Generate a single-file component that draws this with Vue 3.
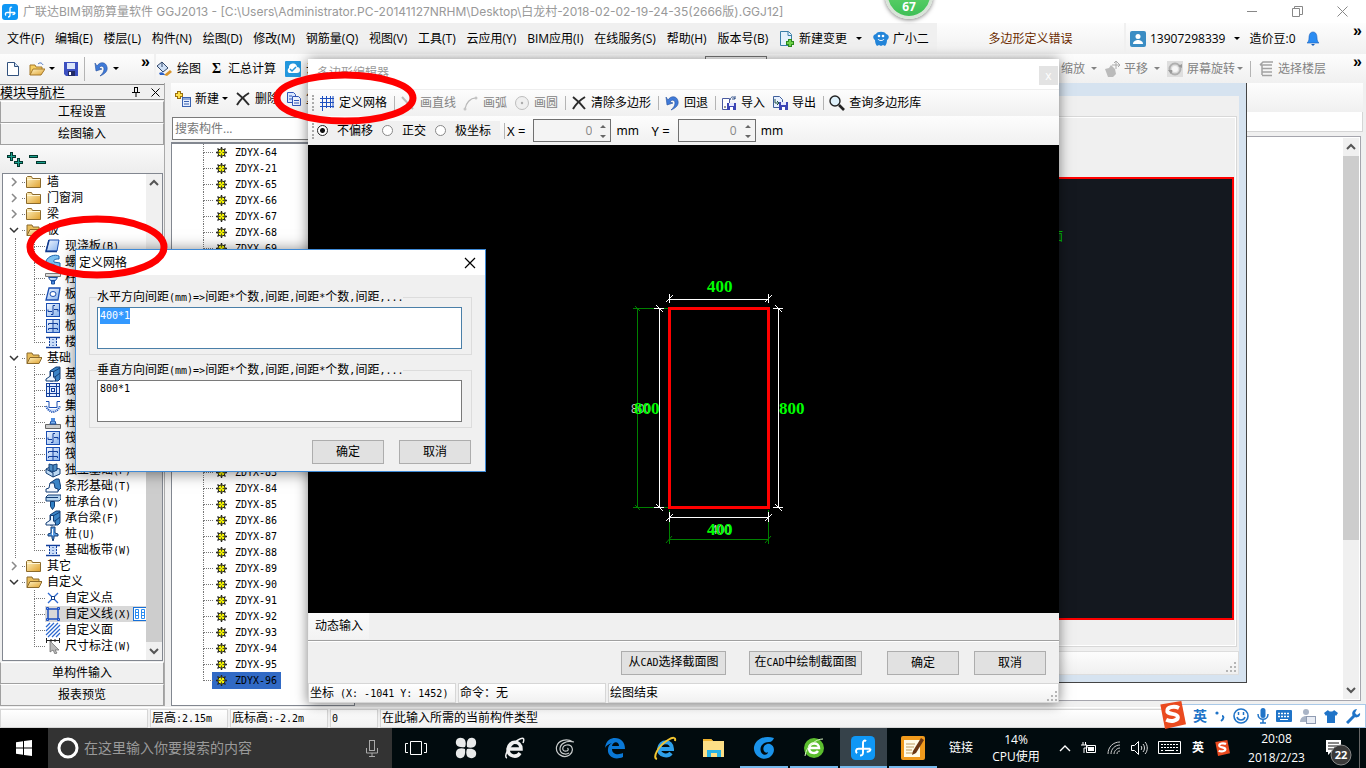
<script setup>
import { h, onMounted, ref } from 'vue'

// Half-width characters are set in a monospace face, half as wide as a CJK glyph.
const Sim = (props) =>
  h(
    'span',
    { class: 'sim' },
    props.t
      .split(/([\x20-\x7e]+)/)
      .filter(Boolean)
      .map((s) => (/^[\x20-\x7e]/.test(s) ? h('span', { class: 'hw' }, s) : s))
  )
Sim.props = ['t']

const Ic = (props) => h('svg', { class: 'ic', viewBox: '0 0 16 16', 'aria-hidden': 'true' }, [h('use', { href: '#' + props.n })])
Ic.props = ['n']

const menus = ['文件(F)', '编辑(E)', '楼层(L)', '构件(N)', '绘图(D)', '修改(M)', '钢筋量(Q)', '视图(V)', '工具(T)', '云应用(Y)', 'BIM应用(I)', '在线服务(S)', '帮助(H)', '版本号(B)']

const tree = [
  { t: '墙' },
  { t: '门窗洞' },
  { t: '梁' },
  {
    t: '板', open: true,
    kids: [['slab', '现浇板(B)'], ['spiral', '螺旋板(B)'], ['cap', '柱帽(V)'], ['hole', '板洞(N)'], ['rebar', '板受力筋(S)'], ['rebar2', '板负筋(F)'], ['strip', '楼层板带(H)']]
  },
  {
    t: '基础', open: true,
    kids: [['beam', '基础梁(F)'], ['raft', '筏板基础(M)'], ['sump', '集水坑(K)'], ['pier', '柱墩(Y)'], ['rebar', '筏板主筋(R)'], ['rebar2', '筏板负筋(X)'], ['iso', '独立基础(P)'], ['stripf', '条形基础(T)'], ['pilecap', '桩承台(V)'], ['beam', '承台梁(F)'], ['pile', '桩(U)'], ['strip', '基础板带(W)']]
  },
  { t: '其它' },
  { t: '自定义', open: true, kids: [['pt', '自定义点'], ['ln', '自定义线(X)'], ['face', '自定义面'], ['dim', '尺寸标注(W)']] }
]

const parts = [64, 21, ...Array.from({ length: 32 }, (_, i) => 65 + i)]

const editTools = [
  { i: 'grid', t: '定义网格', sep: true },
  { i: 'line', t: '画直线', off: true },
  { i: 'arc', t: '画弧', off: true },
  { i: 'circ', t: '画圆', off: true, sep: true },
  { i: 'cross', t: '清除多边形', sep: true },
  { i: 'undo', t: '回退', sep: true },
  { i: 'imp', t: '导入' },
  { i: 'exp', t: '导出', sep: true },
  { i: 'find', t: '查询多边形库' }
]

const hint = '间距(mm)=>间距*个数,间距,间距*个数,间距,...'
const first = ref(null)
onMounted(() => {
  first.value.focus({ preventScroll: true })
  first.value.select()
})
</script>

<template>
  <div class="desk">
    <svg class="defs" width="0" height="0" aria-hidden="true">
      <defs>
        <linearGradient id="gb" x1="0" y1="0" x2="1" y2="1"><stop offset="0" stop-color="#f2f7ff" /><stop offset="1" stop-color="#8ab4ee" /></linearGradient>
        <linearGradient id="gf" x1="0" y1="0" x2="1" y2="1"><stop offset="0" stop-color="#fff3c4" /><stop offset="1" stop-color="#dfa12d" /></linearGradient>
      </defs>
      <symbol id="logo" viewBox="0 0 16 16"><rect width="16" height="16" rx="3" fill="#0f97f5" /><path d="M10 3.500c-1-1-2 0-2 1v6.500c0 2-1 2-2 2M13 8.500H5c-2 0-2 2-1 3M13 8.500c0 1.500-1 2-2.500 2" fill="none" stroke="#fff" stroke-width="1.300" /></symbol>
      <symbol id="new" viewBox="0 0 16 16"><path d="M2.500 1.500h7l4 4v9h-11z" fill="#fff" stroke="#32527e" /><path d="M9.500 1.500v4h4" fill="#cfe0f5" stroke="#32527e" /></symbol>
      <symbol id="open" viewBox="0 0 16 16"><path d="M1 14V4h5l1 2h6v3" fill="#f7cf62" stroke="#a5782a" /><path d="M1 14l3-6h12l-4 6z" fill="url(#gf)" stroke="#a5782a" /><path d="M9 3c2-2 4-1 5 1" fill="none" stroke="#3d6cc0" /></symbol>
      <symbol id="save" viewBox="0 0 16 16"><path d="M1 1h14v14H3l-2-2z" fill="#3c50c0" /><path d="M4 2h8v6H4z" fill="#dce6fa" /><path d="M5 10h7v5H5z" fill="#222b66" /><path d="M6 11h2v3H6z" fill="#fff" /></symbol>
      <symbol id="undo" viewBox="0 0 16 16"><path d="M2 2l1 8 6-2-3-1c2-3 5-2 5 1s-2 5-4 7c5-2 8-5 7-9C13 1 7 0 4 5z" fill="#3f7ad8" stroke="#234f9e" stroke-width=".600" /></symbol>
      <symbol id="paint" viewBox="0 0 16 16"><path d="M1 5l5-4 6 6-5 4z" fill="#cfe0f5" stroke="#33486b" /><path d="M6 1v5" stroke="#33486b" /><path d="M8 14l6-5 2 2-5 4z" fill="#d9952b" /><path d="M3 12c3-2 5 0 6 2H4z" fill="#2c62c8" /></symbol>
      <symbol id="cloud" viewBox="0 0 16 16"><rect width="16" height="16" rx="1" fill="#2397dd" /><path d="M4 12a3 3 0 0 1 0-5 4 4 0 0 1 8-1 3 3 0 0 1 0 6z" fill="#fff" /><path d="M5 8l2 2 4-4" fill="none" stroke="#2397dd" stroke-width="1.500" /></symbol>
      <symbol id="chg" viewBox="0 0 16 16"><path d="M1.500.500h8l3 3v11h-11z" fill="#e4f2fc" stroke="#3a7fa8" /><path d="M9 .500v4h4" fill="none" stroke="#3a7fa8" /><path d="M11 8v8M7 12h8" stroke="#2c8a1d" stroke-width="4" /><path d="M11 9v6M8 12h6" stroke="#6fd24a" stroke-width="2" /></symbol>
      <symbol id="bot" viewBox="0 0 16 16"><path d="M3 3c1-3 9-3 10 0 4 1 3 5 1 6 0 3-1 5-2 6l-2-1-2 1-2-1-2 1C3 14 2 12 2 9 0 8-1 4 3 3z" fill="#2385d9" /><circle cx="6" cy="5" r="1.300" fill="#fff" /><circle cx="10" cy="5" r="1.300" fill="#fff" /><path d="M5 8c1 2 5 2 6 0" stroke="#fff" fill="none" /></symbol>
      <symbol id="user" viewBox="0 0 16 16"><rect width="16" height="16" rx="2" fill="#3b8dc4" /><circle cx="8" cy="5.500" r="2.500" fill="#fff" /><path d="M3 13c0-3 3-4 5-4s5 1 5 4z" fill="#fff" /></symbol>
      <symbol id="bell" viewBox="0 0 16 16"><path d="M8 1c3 0 4 3 4 6s1 4 2 5H2c1-1 2-2 2-5s1-6 4-6z" fill="#2b8cf2" stroke="#1b5fb8" stroke-width=".600" /><path d="M6 13h4l-2 2z" fill="#1b5fb8" /></symbol>
      <symbol id="hand" viewBox="0 0 16 16"><path d="M1 8l4-1 2-3 4 4 1 5-3 3H4z" fill="#bbb" /><path d="M12 0v8M8 4h8M10 2l2-2 2 2M14 2l2 2-2 2" stroke="#aaa" fill="none" /></symbol>
      <symbol id="rot" viewBox="0 0 16 16"><rect width="16" height="16" fill="#dedede" /><circle cx="8" cy="8" r="5.500" fill="none" stroke="#b0b0b0" stroke-width="2" /><path d="M1 9l3 4 2-4zM11 5l4-2v4z" fill="#999" /><circle cx="8" cy="8" r="3" fill="#f7f7f7" /></symbol>
      <symbol id="floors" viewBox="0 0 16 16"><path d="M2 4l3-3h10M2 4h12M4 7.500h10M4 11h10M4 14.500h10M4 4v10" fill="none" stroke="#a2a2a2" stroke-width="1.500" /></symbol>
      <symbol id="add" viewBox="0 0 16 16"><path d="M4 0v8M0 4h8" stroke="#9a6f10" stroke-width="4" /><path d="M4 1v6M1 4h6" stroke="#ffe04a" stroke-width="2" /><rect x="7.500" y="6.500" width="8" height="9" fill="#e6efff" stroke="#3a62b0" /><path d="M8 8h7M9 10.500h5M9 13h5" stroke="#3a62b0" /></symbol>
      <symbol id="cross" viewBox="0 0 16 16"><path d="M2 2c4 3 8 7 12 12M14 2C9 5 5 9 2 14" stroke="#2b2b2b" stroke-width="2" fill="none" /></symbol>
      <symbol id="copy" viewBox="0 0 16 16"><path d="M1.500 1.500h6l2 2v8h-8z" fill="#dbe8ff" stroke="#3056b8" /><path d="M6.500 5.500h6l2 2v7h-8z" fill="#eef4ff" stroke="#3056b8" /><path d="M8 9.500h5M8 12h5M3 5h3M3 8h3" stroke="#3056b8" /></symbol>
      <symbol id="grid" viewBox="0 0 16 16"><path d="M3.500 1v15M7.500 1v12M11.500 1v12M1 3.500h14M1 7.500h14M1 11.500h14M14 1v12" stroke="#1d4fc0" fill="none" /></symbol>
      <symbol id="line" viewBox="0 0 16 16"><path d="M2 2l11 12" stroke="#bbb" stroke-width="2" /></symbol>
      <symbol id="arc" viewBox="0 0 16 16"><path d="M2 14C3 8 7 3 13 3" fill="none" stroke="#b9b9b9" stroke-width="1.200" /><circle cx="13" cy="3" r="1.500" fill="#c4c4c4" /><circle cx="2" cy="14" r="1.500" fill="#c4c4c4" /></symbol>
      <symbol id="circ" viewBox="0 0 16 16"><circle cx="8" cy="8" r="6.500" fill="#efefef" stroke="#bdbdbd" /><circle cx="8" cy="8" r="1.200" fill="#aaa" /></symbol>
      <symbol id="imp" viewBox="0 0 16 16"><path d="M1.500 3.500h7v11h-7z" fill="#fff" stroke="#4a5aa0" /><path d="M6 8h9v7H6z" fill="#3d46b5" /><path d="M8 8h5v3H8z" fill="#e6e9ff" /><path d="M9 12h3v3H9z" fill="#fff" /><path d="M9 5c1-4 4-4 5-1M14 1v3h-3" stroke="#31508a" fill="none" /><path d="M3 12h2" stroke="#333" /></symbol>
      <symbol id="exp" viewBox="0 0 16 16"><path d="M1.500 1.500h6l3 3v8h-9z" fill="#e8f0ff" stroke="#3f5f9a" /><path d="M3 4v4h4M5 6l2 2-2 2" stroke="#254" fill="none" /><path d="M7 7h9v8H7z" fill="#3d46b5" /><path d="M9 7h5v3H9z" fill="#e6e9ff" /><path d="M10 12h3v3h-3z" fill="#fff" /></symbol>
      <symbol id="find" viewBox="0 0 16 16"><circle cx="6" cy="6" r="5" fill="#dff1fb" stroke="#222" stroke-width="1.400" /><path d="M10 10l5 5" stroke="#222" stroke-width="2.600" /></symbol>
      <symbol id="fold" viewBox="0 0 16 16"><path d="M.500 3.500l1-1h4l1 2h8v9H.500z" fill="url(#gf)" stroke="#8b6a2c" /><path d="M1 5.500h13" stroke="#fff6d6" /></symbol>
      <symbol id="foldo" viewBox="0 0 16 16"><path d="M1 13.500V3h5l1 2h6v3" fill="#e9bd5a" stroke="#8b6a2c" /><path d="M1 13.500l3-6h12l-3 6z" fill="url(#gf)" stroke="#8b6a2c" /></symbol>
      <symbol id="slab" viewBox="0 0 16 16"><path d="M4 2h10l-2 11H1z" fill="url(#gb)" stroke="#1b4fb2" /><path d="M4 2L1 13.500h11" fill="none" stroke="#123a8c" stroke-width="1.500" /></symbol>
      <symbol id="spiral" viewBox="0 0 16 16"><path d="M1 7c2-5 9-7 13-5v3c-4 0-6 1-5 3l6 1v5c-4 0-5-4-8-4-2 0-4 1-6 0z" fill="#7cc0f0" stroke="#1a62ae" /></symbol>
      <symbol id="cap" viewBox="0 0 16 16"><path d="M.500 3.500h15v3H.500z" fill="#ddd" stroke="#777" /><path d="M3.500 7.500h9l-2 3h-5z" fill="url(#gb)" stroke="#1b4fa0" /><path d="M6.500 11h3v3h-3z" fill="#4c8be0" stroke="#1b4fa0" /></symbol>
      <symbol id="hole" viewBox="0 0 16 16"><path d="M4 2h11l-2 12H1z" fill="url(#gb)" stroke="#1b4fb2" stroke-width="1.300" /><ellipse cx="8" cy="8" rx="3" ry="2.500" fill="#fff" stroke="#1b4fb2" /></symbol>
      <symbol id="rebar" viewBox="0 0 16 16"><rect x="1.500" y="1.500" width="13" height="13" fill="url(#gb)" stroke="#1b4fb2" /><path d="M3 7.500v2h4M9 7.500h4v2M10 3.500H8v9H6" fill="none" stroke="#123f9c" /></symbol>
      <symbol id="rebar2" viewBox="0 0 16 16"><rect x="1.500" y="1.500" width="13" height="13" fill="url(#gb)" stroke="#1b4fb2" /><path d="M8 2v12" stroke="#123f9c" /><path d="M3.500 7V5.500h9V7M3.500 12v-1.500h9V12" fill="none" stroke="#123f9c" /></symbol>
      <symbol id="strip" viewBox="0 0 16 16"><path d="M1 3.500h14M1 13.500h14" stroke="#123f9c" stroke-width="1.500" /><path d="M4 4h8v9H4z" fill="#c9dcf8" /><path d="M4.500 4v9M11.500 4v9" stroke="#123f9c" stroke-dasharray="2 1" /><path d="M8 5v8" stroke="#123f9c" stroke-dasharray="1 2" /></symbol>
      <symbol id="beam" viewBox="0 0 16 16"><path d="M5 15V5l6-4h4v12l-2 2h-3v-4H8v4z" fill="#3a84c6" stroke="#123d74" /><path d="M5.500 5.500h3V11l2 2v2H1v-2l4.500-3z" fill="#eaf4ff" stroke="#123d74" /><path d="M8 6l7-4M10 11l5-4" stroke="#123d74" /></symbol>
      <symbol id="raft" viewBox="0 0 16 16"><rect x="1.500" y="1.500" width="13" height="13" fill="#e2edff" stroke="#123f9c" /><path d="M4.500 2v12M11.500 2v12M2 4.500h12M2 11.500h12" stroke="#123f9c" /><rect x="6.500" y="6.500" width="3" height="3" fill="none" stroke="#123f9c" /></symbol>
      <symbol id="sump" viewBox="0 0 16 16"><path d="M1 8h3v3h8V8h3c0 4-4 6-7 6S1 12 1 8z" fill="#cfe0fb" /><path d="M1 3.500h3v6h8v-6h3" fill="none" stroke="#1b4fb2" /><path d="M1 8c1 3 4 6 7 6s6-3 7-6" fill="none" stroke="#1b4fb2" stroke-dasharray="1 1" stroke-width="2" /></symbol>
      <symbol id="pier" viewBox="0 0 16 16"><path d="M.500 10.500h15v4H.500z" fill="#ccc" stroke="#666" /><path d="M5 10l1-3h4l1 3z" fill="#7ab0ee" stroke="#1b4fa0" /><path d="M6 4h4v3H6z" fill="#4c8be0" /></symbol>
      <symbol id="iso" viewBox="0 0 16 16"><path d="M1 7l4-2 10 2v5l-7 3-7-4z" fill="#bcd9f3" stroke="#123d74" /><path d="M4 2l4 1 4-1v6l-4 2-4-2z" fill="#4e8ec6" stroke="#123d74" /><path d="M8 3v7M1 7l7 4v4" stroke="#123d74" fill="none" /></symbol>
      <symbol id="stripf" viewBox="0 0 16 16"><path d="M5 5l6-4h3l2 9-4 4z" fill="#3a84c6" stroke="#123d74" /><path d="M1 14v-3l3-1 1-5h4l1 5 3 1v3z" fill="#f4f9ff" stroke="#123d74" /></symbol>
      <symbol id="pilecap" viewBox="0 0 16 16"><path d="M1 3l2-2h13v4l-2 2H1z" fill="#b7d6f0" stroke="#123d74" /><path d="M1 3.500h12" stroke="#123d74" /><path d="M5.500 7.500h4v5l-2 3-2-3z" fill="#2f7fc4" stroke="#123d74" /></symbol>
      <symbol id="pile" viewBox="0 0 16 16"><path d="M6 1h4v6l3 1v2H9v2l-1 3-1-3v-2H3V8l3-1z" fill="#5a9be0" stroke="#123d74" /><path d="M7.500 3v6" stroke="#fff" /></symbol>
      <symbol id="pt" viewBox="0 0 16 16"><path d="M3 3l10 10M13 3L3 13" stroke="#2b68d0" stroke-width="1.300" /><rect x="6.500" y="6.500" width="3" height="3" fill="#fff" stroke="#12408f" /></symbol>
      <symbol id="ln" viewBox="0 0 16 16"><rect x="3" y="3" width="10" height="10" fill="none" stroke="#1d4fc0" stroke-width="1.500" /><path d="M1.500 1.500h2v2h-2zM12.500 1.500h2v2h-2zM1.500 12.500h2v2h-2zM12.500 12.500h2v2h-2z" fill="#7fb0ff" stroke="#1d4fc0" /></symbol>
      <symbol id="face" viewBox="0 0 16 16"><path d="M1 5l4-4M1 9l8-8M1 13l12-12M3 15L15 3M7 15l8-8M11 15l4-4" stroke="#2b68d0" stroke-width="1.200" /></symbol>
      <symbol id="dim" viewBox="0 0 16 16"><path d="M1.500 0v5M14.500 0v5M1 2.500h14M6 1v3M10 1v3" stroke="#222" /><path d="M5 3l9 9h-4l2 3-2 1-2-4-3 2z" fill="#bbb" stroke="#666" stroke-width=".700" /></symbol>
      <symbol id="gear" viewBox="0 0 16 16"><path d="M8.500 3v11M3 8.500h11M4.500 4.500l8 8M12.500 4.500l-8 8" stroke="#222" stroke-width="1.400" /><circle cx="8.500" cy="8.500" r="3.700" fill="#f4f400" stroke="#222" /><path d="M8.500 5v7M5 8.500h7" stroke="#333" stroke-width=".800" /><rect x="7.500" y="7.500" width="2" height="2" fill="#ff0" /></symbol>
      <symbol id="sogou" viewBox="0 0 24 24"><path d="M2 3l18-3 4 20-18 4z" fill="#ea4a1f" /><path d="M18 6c-4-2-11-1-10 3 1 3 9 1 9 5 0 3-6 4-10 2" fill="none" stroke="#fff" stroke-width="3.400" /></symbol>
    </svg>

    <header class="titlebar">
      <Ic n="logo" />
      <span class="grow">广联达BIM钢筋算量软件 GGJ2013 - [C:\Users\Administrator.PC-20141127NRHM\Desktop\白龙村-2018-02-02-19-24-35(2666版).GGJ12]</span>
      <button class="wc" aria-label="最小化"><svg width="11" height="11"><path d="M0 5.500h10" stroke="#888" /></svg></button>
      <button class="wc" aria-label="还原"><svg width="11" height="11"><path d="M.500 2.500h7v8h-7zM2.500 2V.500h8v8H8" fill="none" stroke="#888" /></svg></button>
      <button class="wc" aria-label="关闭"><svg width="11" height="11"><path d="M.500.500l10 10M10.500.500l-10 10" stroke="#888" /></svg></button>
    </header>

    <nav class="menubar">
      <div class="menus">
        <button v-for="m in menus" :key="m">{{ m }}</button>
        <button class="ib"><Ic n="chg" />新建变更<i class="dn"></i></button>
        <button class="ib"><Ic n="bot" />广小二</button>
      </div>
      <div class="band msg"><Sim t="多边形定义错误" /></div>
      <div class="band acct">
        <button class="ib"><Ic n="user" />13907298339<i class="dn"></i></button>
        <span>造价豆:0</span>
        <Ic n="bell" />
        <b class="more">»</b>
      </div>
    </nav>

    <div class="toolbar">
      <div class="band files">
        <button aria-label="新建"><Ic n="new" /></button>
        <button class="ib" aria-label="打开"><Ic n="open" /><i class="dn"></i></button>
        <button aria-label="保存"><Ic n="save" /></button>
        <i class="sep"></i>
        <button class="ib" aria-label="撤销"><Ic n="undo" /><i class="dn"></i></button>
        <b class="more">»</b>
      </div>
      <div class="band tools">
        <button class="ib"><Ic n="paint" />绘图</button>
        <button class="ib"><b class="sum">Σ</b>汇总计算</button>
        <button class="ib"><Ic n="cloud" />云检查</button>
        <i class="combo"></i>
        <div class="right">
          <button class="ib off">缩放<i class="dn"></i></button>
          <button class="ib off"><Ic n="hand" />平移<i class="dn"></i></button>
          <button class="ib off tight"><Ic n="rot" />屏幕旋转<i class="dn"></i></button>
          <i class="sep"></i>
          <button class="ib off"><Ic n="floors" />选择楼层</button>
          <b class="more">»</b>
        </div>
      </div>
    </div>

    <main class="work">
      <aside class="side">
        <div class="sidehead">
          <span class="grow">模块导航栏</span>
          <svg width="10" height="10"><path d="M3 .500h4M3.500 0v5M6.500 0v5M1 5.500h8M5 6v4" stroke="#000" fill="none" /></svg>
          <svg width="9" height="9"><path d="M.500.500l8 8M8.500.500l-8 8" stroke="#000" /></svg>
        </div>
        <button class="bar">工程设置</button>
        <button class="bar">绘图输入</button>
        <div class="expand">
          <svg width="40" height="16"><path d="M4.500 0v9M0 4.500h9M11.500 6v9M7 10.500h9M22 4.500h9M29 10.500h10" stroke="#05382f" stroke-width="3" /><path d="M4.500 1v7M1 4.500h7M11.500 7v7M8 10.500h7M23 4.500h7M30 10.500h8" stroke="#1ba08e" stroke-width="1" /></svg>
        </div>
        <div class="treebox">
          <ul class="tree">
            <li v-for="(g, gi) in tree" :key="g.t">
              <div class="grp">
                <svg class="chev" width="10" height="10"><path :d="g.open ? 'M1 3l4 4 4-4' : 'M3 1l4 4-4 4'" fill="none" :stroke="g.open ? '#333' : '#888'" stroke-width="1.500" /></svg>
                <i class="dot"></i><Ic :n="g.open ? 'foldo' : 'fold'" /><Sim :t="g.t" />
              </div>
              <ul v-if="g.kids" class="kids" :class="{ trunk: gi < tree.length - 1 }">
                <li v-for="k in g.kids" :key="k[1]" :class="{ sel: k[0] === 'ln' }">
                  <span class="kid"><Ic :n="k[0]" /><Sim :t="k[1]" /><svg v-if="k[0] === 'ln'" class="book" width="14" height="14"><rect x=".500" y=".500" width="13" height="13" fill="#fff" stroke="#1670d8" /><path d="M2.500 2.500h3v9h-3zM8.500 2.500h3v9h-3z" fill="none" stroke="#2a8cf0" /><path d="M2 5.500h4M2 8.500h4M8 5.500h4M8 8.500h4" stroke="#2a8cf0" /></svg></span>
                </li>
              </ul>
            </li>
          </ul>
          <div class="scroll side-scroll">
            <svg width="10" height="8"><path d="M1 6l4-4 4 4" fill="none" stroke="#555" stroke-width="2" /></svg>
            <i class="thumb"></i>
            <svg width="10" height="8"><path d="M1 2l4 4 4-4" fill="none" stroke="#555" stroke-width="2" /></svg>
          </div>
        </div>
        <button class="bar">单构件输入</button>
        <button class="bar">报表预览</button>
      </aside>

      <section class="parts">
        <div class="band ptools">
          <button class="ib"><Ic n="add" />新建<i class="dn"></i></button>
          <button class="ib"><Ic n="cross" />删除</button>
          <button class="ib"><Ic n="copy" />复制</button>
        </div>
        <input class="search" aria-label="搜索构件" placeholder="搜索构件..." />
        <ul class="list">
          <li v-for="p in parts" :key="p" :class="{ on: p === 96 }"><span><Ic n="gear" /><Sim :t="'ZDYX-' + p" /></span></li>
        </ul>
      </section>

      <section class="main">
        <div class="band mtools"></div>
        <div class="mrow"></div>
        <div class="mbox">
          <div class="scroll main-scroll">
            <svg width="10" height="8"><path d="M1 6l4-4 4 4" fill="none" stroke="#555" stroke-width="2" /></svg>
            <i class="thumb"></i>
            <svg width="10" height="8"><path d="M1 2l4 4 4-4" fill="none" stroke="#555" stroke-width="2" /></svg>
          </div>
        </div>
        <div class="child">
          <div class="cbody">
            <div class="cgroup">
              <div class="cview"><Sim t="截面" /></div>
            </div>
            <div class="cstat"><svg class="grip" width="12" height="12"><use href="#gripdots" /></svg></div>
          </div>
        </div>
      </section>
    </main>

    <footer class="status">
      <span class="w147"></span>
      <span class="w77"><Sim t="层高:2.15m" /></span>
      <span class="w97"><Sim t="底标高:-2.2m" /></span>
      <span class="w47"><Sim t="0" /></span>
      <span class="grow"><Sim t="在此输入所需的当前构件类型" /></span>
    </footer>

    <footer class="taskbar">
      <button class="start" aria-label="开始"><svg width="16" height="16"><path d="M0 2.200L7 1.200V7.500H0zM8 1l8-1v7.500H8zM0 8.500h7v6.300L0 13.800zM8 8.500h8V16l-8-1z" fill="#fff" /></svg></button>
      <label class="find">
        <svg width="22" height="22"><circle cx="11" cy="11" r="9" fill="none" stroke="#fff" stroke-width="3" /></svg>
        <input placeholder="在这里输入你要搜索的内容" aria-label="搜索" />
        <svg width="12" height="17"><rect x="3.500" y=".500" width="5" height="10" fill="none" stroke="#aaa" /><path d="M.500 8v5h11V8M6 13v3M3 16.500h6" fill="none" stroke="#aaa" /></svg>
      </label>
      <div class="apps">
        <button aria-label="任务视图"><svg width="22" height="16"><path d="M5.500 1.500h11v13h-11zM3 3.500H.500v9H3M19 3.500h2.500v9H19" fill="none" stroke="#fff" /></svg></button>
        <button aria-label="风车"><svg width="22" height="22"><g fill="#e8eaea"><path d="M10 10C3 11 0 8 1 4c1-4 7-4 9-1 1 2 1 5 0 7z" /><path d="M12 10c-1-7 2-10 6-9 4 1 4 7 1 9-2 1-5 1-7 0z" /><path d="M12 12c7-1 10 2 9 6-1 4-7 4-9 1-1-2-1-5 0-7z" /><path d="M10 12c1 7-2 10-6 9-4-1-4-7-1-9 2-1 5-1 7 0z" /></g></svg></button>
        <button aria-label="浏览器"><svg width="22" height="24"><path d="M4 13h13c0-9-12-9-13 0 0 8 9 9 12 4" fill="none" stroke="#f0f0f0" stroke-width="3.500" /><path d="M3 22c-4-1 2-13 11-18 5-3 7-2 5 3" fill="none" stroke="#f0f0f0" stroke-width="1.500" /></svg></button>
        <button aria-label="螺旋"><svg width="20" height="20"><path d="M18 4C12 0 3 2 1.500 9c-1 7 7 12 13 8 5-4 3-11-3-10-5 1-5 7 0 6 2 0 2-2 1-3M19 4c-8-2-14 2-14 7 0 5 6 6 9 4" fill="none" stroke="#c9cccc" stroke-width="1.200" /></svg></button>
        <button aria-label="Edge"><svg width="22" height="22"><path d="M1 11C2 3 7 1 11 1c6 0 10 4 10 11H8c0 6 7 6 11 4v4C10 24 3 19 4 12c0-3 2-5 4-6-4 1-6 3-7 5zm7-2h7c0-5-6-5-7 0z" fill="#0a78d6" /></svg></button>
        <button aria-label="IE"><svg width="24" height="24"><path d="M6 13h13c0-9-12-9-13 0 0 7 9 8 12 4" fill="none" stroke="#2ea0ea" stroke-width="4" /><path d="M4 23c-5-1 1-13 11-19 5-3 8-3 7 1" fill="none" stroke="#f2c530" stroke-width="2" /></svg></button>
        <button aria-label="文件夹"><svg width="22" height="18"><path d="M0 0h8l2 2h11v16H0z" fill="#fddf86" /><path d="M0 0h8l2 2H0z" fill="#efb22e" /><path d="M4 18v-7h14v7h-4v-4H8v4z" fill="#28b2e6" /></svg></button>
        <button class="run" aria-label="广联达G"><svg width="24" height="24"><path d="M22 2C14-1 4 2 2 11c-1 8 7 14 14 11 7-3 8-12 2-14-5-1-8 4-6 7 1 2 3 2 4 1 0 3-5 4-7 0-2-5 2-10 8-10 3 0 4-2 5-4z" fill="#1a93ea" /></svg></button>
        <button class="run" aria-label="绿色浏览器"><svg width="22" height="24"><circle cx="11" cy="12" r="10" fill="#5bbd2e" /><path d="M6 12h10c0-6-9-6-10 0 0 6 7 6 9 3" fill="none" stroke="#fff" stroke-width="2.500" /><path d="M2 20C3 10 13 3 20 3" fill="none" stroke="#d8f7c0" /></svg></button>
        <button class="run act" aria-label="钢筋算量"><svg width="24" height="24" viewBox="0 0 16 16"><use href="#logo" /></svg></button>
        <button class="run" aria-label="记事"><svg width="24" height="24"><rect width="24" height="24" rx="2" fill="#f09a1c" /><path d="M3 4h16v17H3z" fill="#fffbe8" /><path d="M5 8h9M5 11h8M5 14h6M5 17h9" stroke="#bd9c62" /><path d="M20 2l3 2-8 13-4 2 1-4z" fill="#6a3512" /></svg></button>
      </div>
      <span class="lnk">链接</span>
      <span class="cpu">14%<br />CPU使用</span>
      <div class="tray">
        <svg width="12" height="8"><path d="M1 7l5-5 5 5" fill="none" stroke="#fff" stroke-width="1.400" /></svg>
        <svg width="16" height="14"><path d="M5.500 4.500h9v7h-9z" fill="none" stroke="#fff" /><path d="M7 6h6v4H7z" fill="#fff" /><path d="M2 1v3M4.500 1v3M0 4h6v3H3v5" stroke="#fff" fill="none" /></svg>
        <svg width="14" height="14"><path d="M1 13C1 6 6 1 13 1M4 13c0-5 4-9 9-9M7 13c0-3 3-6 6-6M10 13c0-2 1-3 3-3" fill="none" stroke="#ccc" /></svg>
        <svg width="17" height="14"><path d="M.500 4.500h3l4-4v13l-4-4h-3z" fill="none" stroke="#fff" /><path d="M10 5c1 1 1 3 0 4M12 3c2 2 2 6 0 8M14 1c3 3 3 9 0 12" fill="none" stroke="#ddd" /></svg>
        <svg width="24" height="14"><path d="M.500.500h22v12H.500z" fill="none" stroke="#fff" /><path d="M3 3.500h18M3 6.500h18" stroke="#fff" stroke-dasharray="2 1" /><path d="M3 9.500h2M7 9.500h9M18 9.500h2" stroke="#fff" /></svg>
        <b>英</b>
        <svg width="16" height="16" viewBox="0 0 24 24"><use href="#sogou" /></svg>
      </div>
      <span class="clock">20:08<br />2018/2/23</span>
      <button class="note" aria-label="通知"><svg width="28" height="28"><path d="M1 2h15v12H6l-3 3v-3H1z" fill="#fff" /><path d="M3 5h11M3 8h11M3 11h8" stroke="#111" /><circle cx="16" cy="17" r="10" fill="#3a3a3a" stroke="#8a8a8a" /><text x="16" y="21" text-anchor="middle">22</text></svg></button>
    </footer>

    <!-- polygon editor window -->
    <section class="editor" aria-label="多边形编辑器">
      <div class="etitle"><span class="grow">多边形编辑器</span><button aria-label="关闭">x</button></div>
      <div class="band etools">
        <i class="gripv"></i>
        <template v-for="e in editTools" :key="e.t">
          <button class="ib" :class="{ off: e.off }"><Ic :n="e.i" />{{ e.t }}</button>
          <i v-if="e.sep" class="sep"></i>
        </template>
      </div>
      <div class="band eopts">
        <i class="gripv"></i>
        <label class="rad"><input type="radio" name="shift" checked />不偏移</label>
        <label class="rad"><input type="radio" name="shift" />正交</label>
        <label class="rad"><input type="radio" name="shift" />极坐标</label>
        <i class="sep"></i>
        <template v-for="a in ['X', 'Y']" :key="a">
          <label class="axis" :for="'ax' + a">{{ a }} =</label>
          <span class="num"><input :id="'ax' + a" value="0" /><svg width="6" height="17"><path d="M0 6l3-3 3 3zM0 13h6l-3 3z" fill="#666" /></svg></span>
          <span class="unit">mm</span>
        </template>
      </div>
      <div class="canvas">
        <svg viewBox="308 145 751 468">
          <g fill="none" stroke="#008000">
            <path d="M633 308.500h35M633 507.500h35M637.500 308v200M635 306l5 5M635 505l5 5" />
            <path d="M669.500 510v34M768.500 510v34M669 539.500h100M666 543l6-7M765 543l6-7" />
          </g>
          <g class="ghost"><text x="631" y="413">800</text><text x="711" y="534">400</text></g>
          <g fill="none" stroke="#fff">
            <path d="M669 299.500h100M669.500 294v9M768.500 294v9M666 302l7-7M765 302l7-7" />
            <path d="M669 517.500h100M669.500 512v10M768.500 512v10M666 521l7-7M765 521l7-7" />
            <path d="M659.500 308v200M654 308.500h10M654 507.500h10M656 305l7 7M656 504l7 7" />
            <path d="M778.500 308v200M773 308.500h10M773 507.500h10M775 305l7 7M775 504l7 7" />
          </g>
          <rect x="669.500" y="308.500" width="99" height="199" fill="none" stroke="#f00" stroke-width="3" />
          <g class="dimtext"><text x="707" y="292">400</text><text x="634" y="414">800</text><text x="779" y="414">800</text><text x="707" y="535">400</text></g>
        </svg>
      </div>
      <div class="dyn"><button>动态输入</button></div>
      <div class="ebtns">
        <button class="btn"><Sim t="从CAD选择截面图" /></button>
        <button class="btn wide"><Sim t="在CAD中绘制截面图" /></button>
        <button class="btn ok"><Sim t="确定" /></button>
        <button class="btn no"><Sim t="取消" /></button>
      </div>
      <div class="estat">
        <span class="c1"><Sim t="坐标 (X: -1041 Y: 1452)" /></span>
        <span class="c2"><Sim t="命令：无" /></span>
        <span class="grow"><Sim t="绘图结束" /></span>
        <svg class="grip" width="12" height="12"><g id="gripdots" fill="#b5b5b5"><path d="M8 0h2v2H8zM4 4h2v2H4zM8 4h2v2H8zM0 8h2v2H0zM4 8h2v2H4zM8 8h2v2H8z" /></g></svg>
      </div>
    </section>

    <!-- grid definition window -->
    <form class="gridwin" @submit.prevent>
      <div class="gtitle"><span class="grow">定义网格</span><button type="button" aria-label="关闭"><svg width="12" height="12"><path d="M1 1l10 10M11 1L1 11" stroke="#000" stroke-width="1.200" /></svg></button></div>
      <div class="gbody">
        <fieldset>
          <legend><label for="gx"><Sim :t="'水平方向' + hint" /></label></legend>
          <textarea id="gx" ref="first" class="hot" spellcheck="false">400*1</textarea>
        </fieldset>
        <fieldset>
          <legend><label for="gy"><Sim :t="'垂直方向' + hint" /></label></legend>
          <textarea id="gy" spellcheck="false">800*1</textarea>
        </fieldset>
        <div class="gbtns">
          <button class="btn"><Sim t="确定" /></button>
          <button class="btn" type="button"><Sim t="取消" /></button>
        </div>
      </div>
    </form>

    <!-- input method bar -->
    <div class="ime">
      <svg class="s" width="28" height="28" viewBox="0 0 24 24"><use href="#sogou" /></svg>
      <b>英</b>
      <svg width="10" height="14"><circle cx="2" cy="4" r="1.600" fill="#2074c8" /><path d="M7 7c2 0 2 3-1 5" stroke="#2074c8" fill="none" stroke-width="2" /></svg>
      <svg width="16" height="16"><circle cx="8" cy="8" r="7" fill="none" stroke="#2074c8" stroke-width="1.600" /><path d="M5.500 4v3M10.500 4v3M4 9c1 4 7 4 8 0" fill="none" stroke="#2074c8" stroke-width="1.500" /></svg>
      <svg width="12" height="16"><rect x="3.500" width="5" height="10" rx="2.500" fill="#2074c8" /><path d="M1 6c0 7 10 7 10 0M6 12v3M3 15h6" fill="none" stroke="#2074c8" stroke-width="1.500" /></svg>
      <svg width="16" height="14"><rect y="1" width="16" height="12" rx="1" fill="#2074c8" /><path d="M2 4.500h12M2 7.500h12" stroke="#fff" stroke-dasharray="2 1" stroke-width="1.500" /><path d="M4 10.500h8" stroke="#fff" /></svg>
      <svg width="16" height="16"><circle cx="6" cy="4" r="3" fill="#a9b4c6" /><path d="M0 14c0-8 12-8 12 0z" fill="#a9b4c6" /><rect x="6.500" y="8.500" width="9" height="7" fill="#e8ecf4" stroke="#8f9bb2" /></svg>
      <svg width="14" height="14"><path d="M4 1c1 2 5 2 6 0l4 3-2 3-1-1v8H3V6L2 7 0 4z" fill="#2074c8" /></svg>
      <svg width="15" height="15"><path d="M1 14l7-7" stroke="#2074c8" stroke-width="3" /><path d="M14 4l-3 2-2-2 2-4C7 0 5 4 7 7c3 3 8 1 7-3z" fill="#2074c8" /></svg>
    </div>

    <div class="ball"><b>67</b></div>
    <svg class="marks" width="430" height="290" aria-hidden="true"><g fill="none" stroke="#f00" stroke-width="7"><ellipse cx="345" cy="98" rx="68" ry="23" /><ellipse cx="97" cy="247" rx="67" ry="28" /></g></svg>
  </div>
</template>

<style>
body { background: #f0f0f0; }
.sim { font-family: 'Liberation Sans', 'Noto Sans CJK SC', sans-serif; white-space: pre; }
.sim .hw { font-family: 'DejaVu Sans Mono', monospace; font-size: 10px; }
.ic { width: 16px; height: 16px; flex: none; }
</style>

<style scoped>
.desk {
  position: relative; display: flex; flex-direction: column; height: 100vh; overflow: hidden;
  font: 12px/16px 'Open Sans', 'Noto Sans CJK SC', sans-serif; color: #000; background: #f0f0f0;
}
.desk *, .desk *::before { box-sizing: border-box; }
.defs { position: absolute; }
svg { flex: none; display: block; }
button { font: inherit; color: inherit; background: none; border: 0; padding: 0; white-space: nowrap; }
input, textarea { font: inherit; color: inherit; outline: 0; border-radius: 0; margin: 0; }
ul { list-style: none; margin: 0; padding: 0; }
.grow { flex: 1; min-width: 0; white-space: nowrap; }
.band { display: flex; align-items: center; background: linear-gradient(#fdfdfd, #f0f0f0); }
.ib { display: flex; align-items: center; gap: 4px; }
.off { color: #838383; }
.dn { border: 3px solid transparent; border-top-color: currentColor; border-bottom: 0; margin-left: 5px; }
.sep { width: 1px; height: 14px; background: #b4b4b4; flex: none; }
.more { font: bold 16px/16px 'Liberation Sans', sans-serif; align-self: flex-start; }

.titlebar { display: flex; align-items: center; gap: 5px; height: 23px; padding: 0 4px 0 2px; background: #fff; color: #999; font-family: Inter, 'Noto Sans CJK SC', sans-serif; }
.wc { width: 40px; display: flex; justify-content: center; }
.menubar { display: flex; height: 31px; gap: 2px; background: #f0f0f0; }
.menus { display: flex; align-items: center; justify-content: space-between; padding: 0 6px 0 7px; width: 935px; flex: none; }
.msg { flex: 1; justify-content: center; color: #6b2c00; }
.acct { width: 240px; gap: 9px; padding: 0 4px; }
.acct .more, .tools .more { margin-left: auto; }

.toolbar { display: flex; height: 29px; gap: 2px; }
.files { width: 154px; padding-left: 5px; gap: 8px; }
.files .sep { height: 24px; margin-left: -3px; }
.files .dn { margin-left: 4px; }
.files .ib + .more { margin-left: 14px; }
.files .ib { gap: 0; }
.tools { flex: 1; gap: 9px; position: relative; }
.tools .ib { gap: 5px; }
.sum { font: bold 14px/16px 'Liberation Serif', serif; width: 13px; }
.combo { position: absolute; left: 549px; top: 2px; width: 62px; height: 22px; border: 1px solid #777; }
.right { display: flex; align-items: center; align-self: stretch; gap: 7px; width: 305px; margin-left: auto; padding-right: 4px; }
.right .sep { height: 16px; }
.right .ib { gap: 4px; }
.right .dn { margin-left: 2px; }
.right .tight .dn { margin-left: -2px; }

.work { flex: 1; min-height: 0; display: flex; gap: 6px; padding-bottom: 1px; }
.side { width: 165px; flex: none; display: flex; flex-direction: column; border-right: 1px solid #aaa; }
.sidehead { display: flex; align-items: center; gap: 10px; height: 16px; padding-right: 4px; border: 1px solid #888; border-width: 1px 0; font-size: 13px; margin: 1px 0; }
.bar { height: 22px; flex: none; border: 1px solid #a0a0a0; border-top-color: #fff; background: #f0f0f0; }
.expand { height: 28px; flex: none; padding: 7px 7px; background: linear-gradient(#fafafa, #ededed); }
.treebox { flex: 1; min-height: 0; display: flex; margin: 0 1px 1px 2px; border: 1px solid #828790; background: #fff; overflow: hidden; }
.tree { flex: 1; min-width: 0; overflow: hidden; }
.grp { display: flex; align-items: center; height: 16px; padding-left: 6px; }
.dot { width: 3px; margin: 0 1px 0 3px; border-top: 1px dotted #777; }
.grp .ic { margin-right: 5px; }
.kids { position: relative; }
.kids.trunk::before { content: ''; position: absolute; left: 12px; top: 0; bottom: 0; border-left: 1px dotted #777; }
.kids li { position: relative; height: 16px; padding-left: 42px; }
.kids li::before { content: ''; position: absolute; left: 31px; top: 0; width: 11px; height: 9px; border: 1px dotted #777; border-width: 0 0 1px 1px; }
.kids li:not(:last-child)::after { content: ''; position: absolute; left: 31px; top: 8px; height: 8px; border-left: 1px dotted #777; }
.kid { display: inline-flex; align-items: center; gap: 4px; height: 16px; }
.sel .kid { background: #d8d8d8; }
.book { margin-left: -2px; }
.scroll { display: flex; flex-direction: column; align-items: center; background: #f0f0f0; width: 16px; flex: none; }
.scroll svg { margin: 5px 0; }
.thumb { width: 100%; background: #cdcdcd; }
.side-scroll .thumb { flex: 1; margin-top: 110px; }

.parts { width: 184px; flex: none; display: flex; flex-direction: column; }
.ptools { height: 31px; gap: 7px; padding-left: 4px; }
.ptools .dn { margin-left: -1px; }
.search { height: 23px; margin: 3px 0 2px 1px; padding: 0 2px; border: 1px solid #7a7a7a; background: #fff; min-width: 0; }
.search::placeholder { color: #777; opacity: 1; }
.list { flex: 1; min-height: 0; overflow: hidden; background: #fff; border: 1px solid #828790; border-top-width: 2px; padding-left: 31px; }
.list li { display: flex; align-items: center; height: 16px; position: relative; padding-left: 9px; }
.list li::before { content: ''; position: absolute; left: 0; top: 0; width: 10px; height: 9px; border: 1px dotted #777; border-width: 0 0 1px 1px; }
.list li:not(:last-child)::after { content: ''; position: absolute; left: 0; top: 8px; height: 8px; border-left: 1px dotted #777; }
.list li > span { display: flex; align-items: center; padding: 0 4px 0 1px; gap: 6px; }
.list .on > span { background: #316ac5; }

.main { flex: 1; position: relative; display: flex; flex-direction: column; margin-left: -3px; padding-right: 3px; }
.mtools { height: 29px; }
.mrow { height: 20px; background: #fff; border: 1px solid #d5d5d5; border-width: 0 1px 1px 0; }
.mbox { flex: 1; margin: 4px 2px 5px 0; background: #fff; border: 1px solid #a5a5ad; display: flex; justify-content: flex-end; padding: 1px; }
.main-scroll .thumb { height: 384px; margin-bottom: auto; }
.child { position: absolute; left: 0; right: 119px; top: 0; bottom: 23px; padding: 13px 7px 7px 0; background: #d6e3f0; border: 1px solid #444; border-top: 0; }
.cbody { height: 100%; display: flex; flex-direction: column; background: #f0f0f0; }
.cgroup { flex: 1; margin: 20px 2px 4px 0; padding: 60px 2px 26px 0; border: 1px solid #d8d8d8; outline: 1px solid #fff; outline-offset: -2px; }
.cview { height: 100%; background: #14181f; border: 2px solid #f00; color: #0d0; padding: 50px 0 0 677px; }
.cstat { height: 24px; background: linear-gradient(#fdfdfd, #f0f0f0); border: 1px solid #ddd; position: relative; }
.grip { position: absolute; right: 0; bottom: 0; }

.status { display: flex; gap: 2px; height: 21px; padding-top: 1px; border-top: 1px solid #fff; flex: none; }
.status span[class^='w'], .status > .grow { border: 1px solid #d6d6d6; background: linear-gradient(#fff, #f1f1f1); padding: 0 1px; line-height: 16px; overflow: hidden; }
.w147 { width: 148px; }
.w77 { width: 78px; }
.w97 { width: 98px; }
.w47 { width: 48px; }

.taskbar { display: flex; align-items: center; height: 40px; flex: none; background: #010b0e; color: #fff; }
.start { width: 48px; height: 40px; background: #000; display: flex; align-items: center; justify-content: center; }
.find { display: flex; align-items: center; gap: 5px; width: 344px; height: 40px; padding: 0 14px 0 9px; background: #333; }
.find input { flex: 1; min-width: 0; border: 0; background: none; font-size: 14px; padding: 0; }
.find input::placeholder { color: #9a9a9a; opacity: 1; }
.apps { display: flex; gap: 2px; align-self: stretch; width: 545px; }
.apps button { flex: 1; display: flex; align-items: center; justify-content: center; border-bottom: 2px solid transparent; border-top: 2px solid transparent; }
.apps .run { border-bottom-color: #76b9ed; }
.apps .act { background: #36424a; border-top-color: #36424a; }
.lnk { width: 41px; text-align: right; padding-right: 5px; }
.cpu { width: 76px; text-align: center; line-height: 17px; }
.tray { display: flex; align-items: center; gap: 10px; width: 186px; padding-left: 5px; }
.clock { width: 73px; text-align: center; line-height: 19px; }
.note { margin-left: auto; width: 41px; height: 40px; padding: 8px 0 0 6px; border-right: 1px solid #666; margin-right: 6px; }
.note text { font: bold 11px 'Open Sans', sans-serif; fill: #fff; }

.editor { position: absolute; left: 308px; top: 59px; width: 751px; height: 644px; display: flex; flex-direction: column; background: #f0f0f0; box-shadow: 0 1px 12px rgba(0, 0, 0, .5); }
.etitle { display: flex; height: 30px; padding: 6px 1px 0 9px; background: #fff; color: #999; }
.etitle button { width: 19px; height: 19px; background: #e3e3e3; color: #fff; margin-top: 1px; }
.etools { height: 27px; padding-left: 4px; gap: 5px; border-top: 1px solid #eee; }
.etools .ib + .ib { margin-left: 2px; }
.etools .sep { margin-left: 2px; }
.gripv { width: 2px; height: 16px; border-left: 2px dotted #aaa; }
.eopts { height: 29px; padding-left: 4px; }
.rad { display: flex; align-items: center; gap: 9px; height: 19px; background: #f0f0f0; padding-right: 9px; }
.gripv + .rad { margin-left: 3px; }
.rad input { appearance: none; width: 11px; height: 11px; border: 1px solid #888; border-radius: 50%; background: #fff; }
.rad input:checked { border-color: #222; background: radial-gradient(#111 2px, #fff 3px); }
.eopts .sep { margin: 0 2px 0 4px; height: 16px; }
.axis, .unit { font: 13px/16px 'Noto Sans', sans-serif; white-space: pre; }
.num { display: flex; align-items: center; width: 78px; height: 23px; margin: 0 5px 0 8px; padding-right: 4px; border: 1px solid #707070; background: #f4f4f4; }
.num input { flex: 1; min-width: 0; border: 0; background: none; text-align: right; color: #888; padding: 0 8px 0 0; }
.unit { width: 35px; font-size: 12px; }
.canvas { flex: 1; min-height: 0; background: #000; }
.canvas svg { width: 100%; height: 100%; }
.dimtext { font: bold 17px 'Liberation Serif', serif; fill: #0f0; }
.ghost { font: 12px 'Liberation Sans', sans-serif; fill: #c8c8c8; }
.dyn { height: 28px; border-bottom: 1px solid #a0a0a0; padding-left: 1px; }
.dyn button { width: 60px; height: 26px; background: linear-gradient(#fafafa, #f3f3f3); }
.ebtns { display: flex; align-items: center; justify-content: flex-end; height: 42px; padding-right: 13px; border-top: 1px solid #fff; }
.btn { min-width: 72px; height: 24px; border: 1px solid #adadad; background: #e1e1e1; }
.ebtns .btn { width: 105px; }
.ebtns .wide { width: 113px; margin: 0 25px 0 23px; }
.ebtns .ok, .ebtns .no { width: 72px; }
.ebtns .no { margin-left: 15px; }
.estat { display: flex; gap: 2px; height: 20px; position: relative; }
.estat span[class^='c'], .estat > .grow { border: 1px solid #d6d6d6; background: linear-gradient(#fff, #f1f1f1); padding: 0 1px; line-height: 18px; }
.c1 { width: 148px; }
.c2 { width: 148px; }

.gridwin { position: absolute; left: 75px; top: 249px; width: 411px; height: 223px; border: 1px solid #3f8ad6; background: #f0f0f0; box-shadow: 0 1px 14px rgba(0, 0, 0, .5); }
.gtitle { display: flex; align-items: center; height: 25px; padding: 0 9px 0 3px; background: #fff; }
.gbody { padding: 14px 13px 0 13px; }
fieldset { margin: 0; padding: 2px 9px 6px 7px; border: 1px solid #dcdcdc; min-width: 0; height: 66px; }
fieldset + fieldset { margin-top: 7px; }
legend { padding: 0; height: 16px; }
textarea { display: block; width: 100%; height: 42px; resize: none; padding: 0 2px; border: 1px solid #7a7a7a; background: #fff; font: 10px/16px 'DejaVu Sans Mono', monospace; overflow: hidden; }
textarea.hot { border-color: #4a7fa8; }
textarea::selection { background: #3399ff; color: #fff; }
.gbtns { display: flex; justify-content: flex-end; gap: 15px; margin-top: 12px; padding-right: 1px; }

.ime { position: absolute; right: 0; bottom: 40px; height: 24px; display: flex; align-items: center; justify-content: space-between; width: 198px; padding: 0 4px 0 24px; background: #fff; border: 1px solid #a9c9e8; }
.ime .s { position: absolute; left: -11px; top: -4px; }
.ime b { color: #2074c8; font-size: 14px; }
.ball { position: absolute; left: 885px; top: -29px; width: 48px; height: 48px; border-radius: 50%; background: linear-gradient(#7ae07a, #3cbf55); border: 3px solid #d8e4d8; color: #fff; display: flex; justify-content: center; align-items: flex-end; padding-bottom: 2px; line-height: 14px; box-shadow: 0 1px 4px rgba(0, 0, 0, .5); }
.marks { position: absolute; left: 0; top: 0; pointer-events: none; }
</style>
